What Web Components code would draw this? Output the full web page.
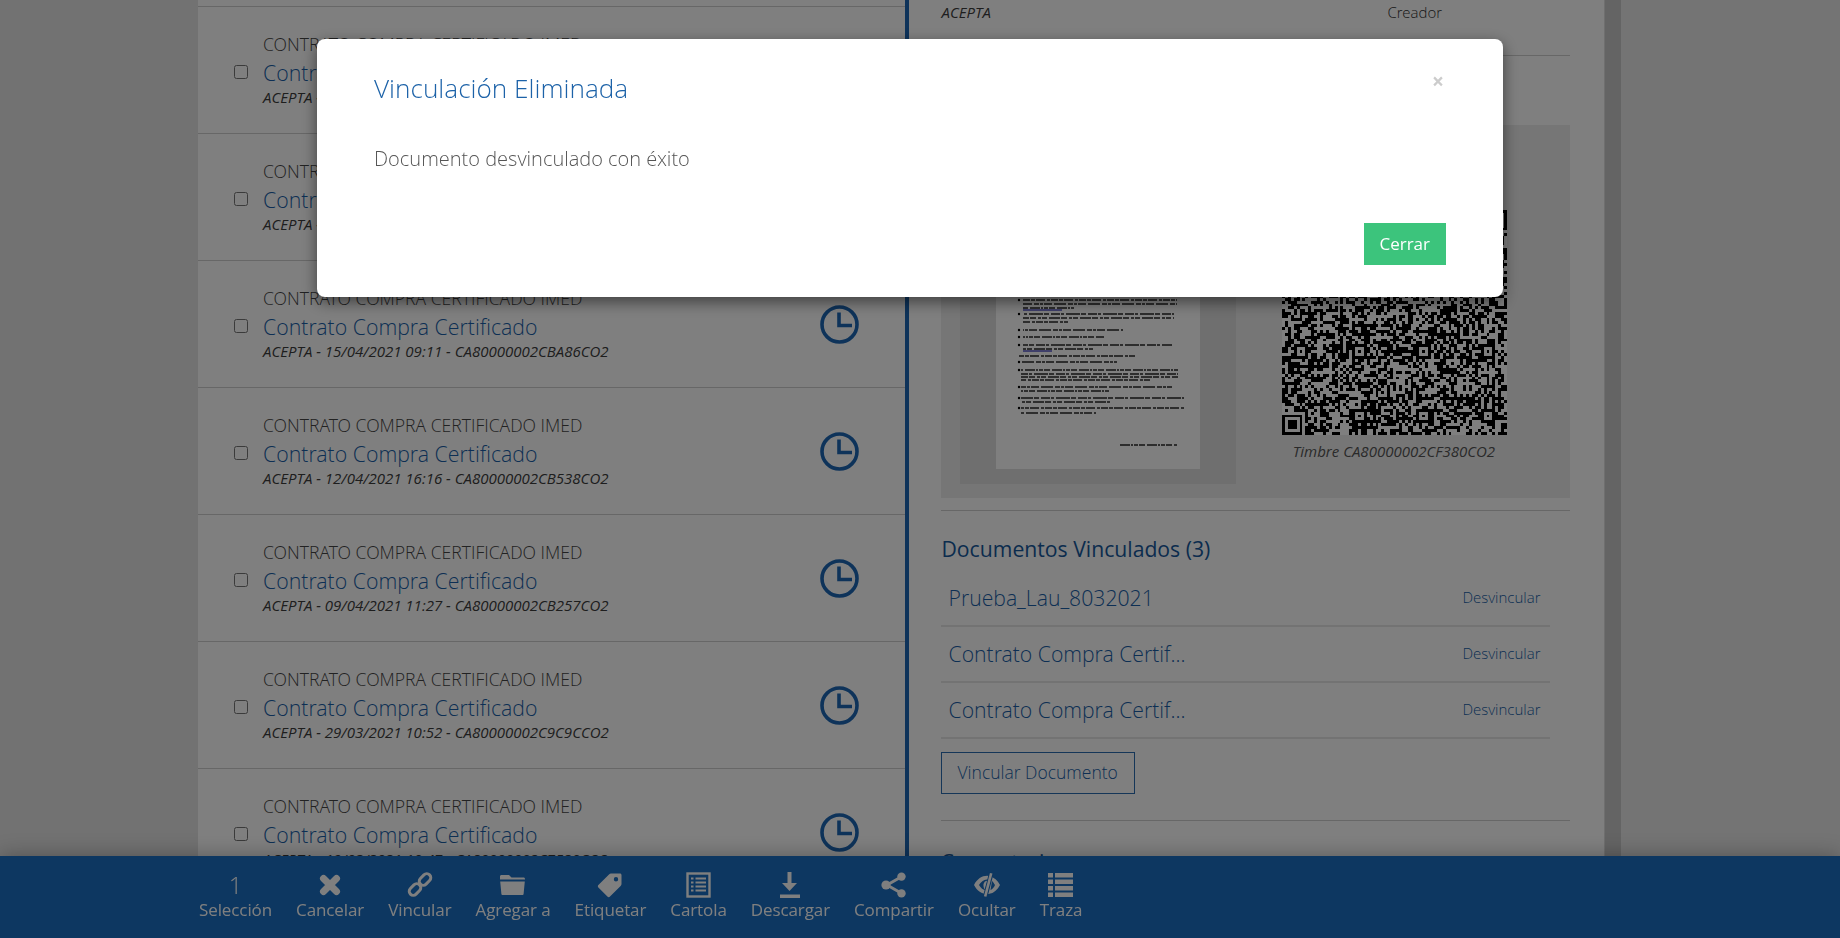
<!DOCTYPE html>
<html lang="es">
<head>
<meta charset="utf-8">
<title>Documentos</title>
<style>
    html, body { margin: 0; height: 100%; overflow: hidden; }
    body { font-family: "Open Sans", "Liberation Sans", sans-serif; background: #e4e4e4; }
</style>
</head>
<body>
<app-shell>
    <doc-list slot="list">
        <doc-row date="27/04/2021 12:02" code="CA80000002CD110CO2"></doc-row>
        <doc-row date="20/04/2021 15:38" code="CA80000002CC4A2CO2"></doc-row>
        <doc-row date="15/04/2021 09:11" code="CA80000002CBA86CO2"></doc-row>
        <doc-row date="12/04/2021 16:16" code="CA80000002CB538CO2"></doc-row>
        <doc-row date="09/04/2021 11:27" code="CA80000002CB257CO2"></doc-row>
        <doc-row date="29/03/2021 10:52" code="CA80000002C9C9CCO2"></doc-row>
        <doc-row date="19/03/2021 10:47" code="CA80000002C7520CO2"></doc-row>
    </doc-list>
    <doc-detail slot="detail"></doc-detail>
</app-shell>

<action-bar>
    <bar-item label="Selección"><span class="count">1</span></bar-item>
    <bar-item label="Cancelar" icon="cancel"></bar-item>
    <bar-item label="Vincular" icon="link"></bar-item>
    <bar-item label="Agregar a" icon="folder"></bar-item>
    <bar-item label="Etiquetar" icon="tag"></bar-item>
    <bar-item label="Cartola" icon="list"></bar-item>
    <bar-item label="Descargar" icon="download"></bar-item>
    <bar-item label="Compartir" icon="share"></bar-item>
    <bar-item label="Ocultar" icon="eye"></bar-item>
    <bar-item label="Traza" icon="rows"></bar-item>
</action-bar>

<modal-dialog heading="Vinculación Eliminada">
    Documento desvinculado con éxito
</modal-dialog>

<script>
const LIGHT = '"Open Sans Light", "Open Sans", "Liberation Sans", sans-serif';

/**
 * Page frame: grey gutter, content column, scrollbar strip
 */
class AppShell extends HTMLElement {
    constructor() {
        super();
        this.attachShadow({ mode: 'open' });
        this.shadowRoot.innerHTML = `
            <style>
                :host { display: flex; height: 938px; overflow: hidden; }
                .gutter { flex: 0 0 198px; }
                .content { flex: 0 0 1406px; display: flex; background: #fff; }
                .strip { flex: 0 0 17px; background: #c8c8c8; border-left: 1px solid #dedede; box-sizing: border-box; }
                .rest { flex: 1; background: #e8e8e8; }
            </style>
            <div class="gutter"></div>
            <div class="content">
                <slot name="list"></slot>
                <slot name="detail"></slot>
            </div>
            <div class="strip"></div>
            <div class="rest"></div>
        `;
    }
}

class DocList extends HTMLElement {
    constructor() {
        super();
        this.attachShadow({ mode: 'open' });
        this.shadowRoot.innerHTML = `
            <style>
                :host { display: block; width: 707px; height: 938px; overflow: hidden; }
                .cut { height: 6px; border-bottom: 1px solid #cfcfcf; }
            </style>
            <div class="cut"></div>
            <slot></slot>
        `;
    }
}

class DocRow extends HTMLElement {
    constructor() {
        super();
        this.attachShadow({ mode: 'open' });
    }

    connectedCallback() {
        const date = this.getAttribute('date');
        const code = this.getAttribute('code');
        this.shadowRoot.innerHTML = `
            <style>
                :host {
                    display: flex;
                    align-items: center;
                    box-sizing: border-box;
                    height: 127px;
                    padding: 0 46px 0 36px;
                    border-bottom: 1px solid #cfcfcf;
                    font-family: ${LIGHT};
                }
                input { width: 14px; height: 14px; margin: 3px 15px 0 0; flex: none; }
                .text { flex: 1; min-width: 0; padding-bottom: 1px; }
                .kind { font-size: 17.6px; line-height: 22px; font-weight: 300; color: #444; }
                .name { font-size: 21.3px; line-height: 27px; font-weight: 300; color: #1a5fa8; margin-top: 4px; }
                .meta { font-family: "Open Sans", sans-serif; font-size: 15px; line-height: 20px; font-style: italic; color: #3c3c3c; margin-top: 1px; }
                svg { flex: none; display: block; }
            </style>
            <input type="checkbox">
            <div class="text">
                <div class="kind">CONTRATO COMPRA CERTIFICADO IMED</div>
                <div class="name">Contrato Compra Certificado</div>
                <div class="meta">ACEPTA - ${date} - ${code}</div>
            </div>
            <svg width="39" height="39" viewBox="0 0 39 39" fill="none" stroke="#1c66b4" stroke-width="3.6">
                <circle cx="19.5" cy="19.5" r="17.5"/>
                <path d="M19 7.5V20.5H32"/>
            </svg>
        `;
    }
}

/* Right column with the signature preview and linked documents */
class DocDetail extends HTMLElement {
    constructor() {
        super();
        this.attachShadow({ mode: 'open' });
        this.shadowRoot.innerHTML = `
            <style>
                :host {
                    display: block;
                    width: 699px;
                    height: 938px;
                    overflow: hidden;
                    box-sizing: border-box;
                    border-left: 4.5px solid #1c66b4;
                    padding-left: 31.5px;
                    font-family: ${LIGHT};
                }
                .inner { width: 629px; }
                .signer {
                    display: flex;
                    height: 56px;
                    box-sizing: border-box;
                    padding-left: 1px;
                    font-size: 15px;
                    line-height: 24px;
                    font-weight: 300;
                    color: #333;
                    border-bottom: 1px solid #cfcfcf;
                }
                .signer i { flex: 0 0 446px; font-family: "Open Sans", sans-serif; font-weight: 400; color: #3c3c3c; }
                .seal {
                    display: flex;
                    margin-top: 69px;
                    height: 373px;
                    box-sizing: border-box;
                    padding: 14px 0 14px 19px;
                    background: #ededed;
                }
                .caption {
                    font-family: "Open Sans", sans-serif;
                    font-size: 15px;
                    line-height: 20px;
                    font-style: italic;
                    color: #555;
                    text-align: center;
                    margin-top: 6px;
                }
                .stamp { margin: 71px 0 0 46px; width: 225px; }
                hr { border: 0; border-top: 1px solid #cfcfcf; margin: 0; }
                .sep-a { margin-top: 12px; }
                h3 {
                    margin: 24px 0 9px 1px;
                    font-family: "Open Sans", sans-serif;
                    font-size: 21.2px;
                    line-height: 27px;
                    font-weight: 400;
                    color: #17599c;
                }
                .linked { width: 609px; }
                .btn {
                    display: inline-block;
                    box-sizing: border-box;
                    height: 42px;
                    margin-top: 13px;
                    padding: 0 16px;
                    border: 1px solid #2a6cb0;
                    font-size: 17.5px;
                    line-height: 38px;
                    font-weight: 300;
                    color: #1a5fa8;
                }
                .sep-b { margin-top: 26px; }
                .comments { margin: 27px 0 0; }
            </style>
            <div class="inner">
                <div class="signer"><i>ACEPTA</i><span>Creador</span></div>
                <div class="seal">
                    <doc-preview></doc-preview>
                    <div class="stamp">
                        <qr-code></qr-code>
                        <div class="caption">Timbre CA80000002CF380CO2</div>
                    </div>
                </div>
                <hr class="sep-a">
                <h3>Documentos Vinculados (3)</h3>
                <div class="linked">
                    <linked-doc name="Prueba_Lau_8032021"></linked-doc>
                    <linked-doc name="Contrato Compra Certif..."></linked-doc>
                    <linked-doc name="Contrato Compra Certif..."></linked-doc>
                </div>
                <div class="btn">Vincular Documento</div>
                <hr class="sep-b">
                <h3 class="comments">Comentarios</h3>
            </div>
        `;
    }
}

class LinkedDoc extends HTMLElement {
    constructor() {
        super();
        this.attachShadow({ mode: 'open' });
    }

    connectedCallback() {
        this.shadowRoot.innerHTML = `
            <style>
                :host {
                    display: flex;
                    justify-content: space-between;
                    align-items: center;
                    box-sizing: border-box;
                    height: 56px;
                    padding: 0 9px 2px 8px;
                    border-bottom: 2px solid #e6e6e6;
                    font-weight: 300;
                    color: #1a5fa8;
                }
                .name { font-size: 21.2px; }
                .unlink { font-size: 15px; }
            </style>
            <span class="name">${this.getAttribute('name')}</span>
            <span class="unlink">Desvincular</span>
        `;
    }
}

/* Thumbnail of the signed page, the print is too small to be read */
class DocPreview extends HTMLElement {
    constructor() {
        super();
        this.attachShadow({ mode: 'open' });
        const lines = [
            [1023, 1177, 300], [1023, 1177, 304], [1023, 1074, 308],
            [1023, 1174, 314], [1023, 1174, 318], [1023, 1068, 322],
            [1023, 1123, 330], [1023, 1104, 337],
            [1023, 1172, 345], [1023, 1093, 349],
            [1019, 1135, 356], [1021, 1117, 362],
            [1021, 1178, 370], [1021, 1178, 374], [1021, 1178, 377], [1021, 1150, 380],
            [1021, 1172, 387], [1021, 1110, 391],
            [1021, 1184, 398], [1021, 1110, 402],
            [1021, 1184, 408], [1021, 1096, 413],
            [1119, 1177, 445]
        ];
        const dashes = ['7 1 4 1 9 2 3 1', '12 2 5 1 3 1 8 2', '4 1 6 2 10 1 2 1', '9 1 3 2 14 1 5 2', '5 2 11 1 6 2 3 1'];
        const bullets = [300, 314, 330, 337, 345, 362, 370, 387, 398, 408];
        const top = 139, left = 960;
        const ink = lines.map(([a, b, y], i) =>
            `<line x1="${a - left}" x2="${b - left}" y1="${y - top}" y2="${y - top}" stroke-dasharray="${dashes[i % 5]}" stroke-dashoffset="${i * 3}"/>`).join('');
        const dots = bullets.map(y => `<circle cx="${1019 - left}" cy="${y - top}" r="1.2"/>`).join('');
        this.shadowRoot.innerHTML = `
            <style>
                :host { display: block; width: 276px; height: 345px; background: #dfdfdf; }
                svg { display: block; }
            </style>
            <svg width="276" height="345" viewBox="0 0 276 345">
                <defs><filter id="soft"><feGaussianBlur stdDeviation="0.5"/></filter></defs>
                <rect x="36" y="0" width="204" height="330" fill="#fff"/>
                <g filter="url(#soft)">
                    <g stroke="#000" stroke-width="1.5" opacity=".85">${ink}</g>
                    <g fill="#000">${dots}</g>
                    <g stroke="#00a" stroke-width="1"><line x1="63" x2="102" y1="171" y2="171"/><line x1="63" x2="92" y1="212" y2="212"/></g>
                </g>
            </svg>
        `;
    }
}

class QrCode extends HTMLElement {
    constructor() {
        super();
        this.attachShadow({ mode: 'open' });
        this.shadowRoot.innerHTML = `
            <style>
                :host { display: block; width: 225px; height: 225px; background: #fff; }
                svg { display: block; }
            </style>
            <svg width="225" height="225" viewBox="0 0 77 77" shape-rendering="crispEdges">${this.modules()}</svg>
        `;
    }

    modules() {
        const size = 77;
        const grid = [];
        let seed = 38016;
        const rand = () => {
            seed = (seed * 1664525 + 1013904223) >>> 0;
            return (seed >>> 16) / 65536;
        };
        for (let y = 0; y < size; y++) {
            grid.push([]);
            for (let x = 0; x < size; x++) grid[y].push(rand() < 0.52);
        }
        const block = (x0, y0, w, fn) => {
            for (let y = y0; y < y0 + w; y++) {
                for (let x = x0; x < x0 + w; x++) {
                    if (grid[y] && x >= 0 && x < size) grid[y][x] = fn(x - x0, y - y0);
                }
            }
        };
        const finder = (x, y) => {
            block(x - 1, y - 1, 9, () => false);
            block(x, y, 7, (i, j) => i === 0 || j === 0 || i === 6 || j === 6 || (i > 1 && i < 5 && j > 1 && j < 5));
        };
        const align = [6, 26, 48, 70];
        align.forEach(ay => align.forEach(ax => {
            block(ax - 2, ay - 2, 5, (i, j) => i === 0 || j === 0 || i === 4 || j === 4 || (i === 2 && j === 2));
        }));
        finder(0, 0);
        finder(70, 0);
        finder(0, 70);
        let out = '';
        grid.forEach((row, y) => row.forEach((on, x) => {
            if (on) out += `<rect x="${x}" y="${y}" width="1" height="1"/>`;
        }));
        return out;
    }
}

const BAR_ICONS = {
    cancel: '<path d="M6.5 6.5L19.5 19.5M19.5 6.5L6.5 19.5" stroke="#fff" stroke-width="7" stroke-linecap="round" fill="none"/>',
    link: `<g fill="none" stroke="#fff" stroke-width="3">
            <rect x="1.5" y="13.5" width="13" height="8" rx="4" transform="rotate(-45 8 17.5)"/>
            <rect x="11.5" y="3.5" width="13" height="8" rx="4" transform="rotate(-45 18 7.5)"/>
           </g>`,
    folder: '<path d="M0 7V4.5C0 3.7.6 3 1.5 3H9l2.5 2.5H23.5C24.4 5.5 25 6.2 25 7v.5H0ZM.2 9.5H24.8L23.6 22c-.1.6-.6 1-1.2 1H2.6c-.6 0-1.1-.4-1.2-1Z" fill="#fff"/>',
    tag: '<path fill-rule="evenodd" d="M14 1.5H23c.8 0 1.5.7 1.5 1.5v9c0 .8-.3 1.4-.9 2L13 24.6c-.7.7-1.9.7-2.6 0L1.4 15.6c-.7-.7-.7-1.9 0-2.6L12 2.4c.6-.6 1.2-.9 2-.9ZM19 5a2.2 2.2 0 1 0 0 4.4A2.2 2.2 0 0 0 19 5Z" fill="#fff"/>',
    list: `<rect x="1.5" y="1.5" width="22" height="23" fill="none" stroke="#fff" stroke-width="2.4"/>
           <path d="M5 6.5h2.5M9.5 6.5H20M5 10.5h2.5M9.5 10.5H20M5 14.5h2.5M9.5 14.5H20M5 18.5h2.5M9.5 18.5H20" stroke="#fff" stroke-width="2" fill="none"/>`,
    download: '<path d="M10.5 0h4v11h5.5l-7.5 8-7.5-8h5.5ZM3 22.5h20v3.5H3Z" fill="#fff"/>',
    share: `<path d="M6 13L20 5M6 13L20 21" stroke="#fff" stroke-width="3" fill="none"/>
            <circle cx="5" cy="13" r="4.6" fill="#fff"/><circle cx="20.5" cy="4.6" r="4.2" fill="#fff"/><circle cx="20.5" cy="21.4" r="4.2" fill="#fff"/>`,
    eye: `<path fill-rule="evenodd" d="M0 13C3 7 8 3.800 13 3.800S23 7 26 13c-3 6-8 9.200-13 9.200S3 19 0 13ZM5 13c1.800 3 4 5 7 5.300l3.500-10.600C14.700 7.500 13.800 7.500 13 7.500 9.500 7.500 6.800 10 5 13ZM16.500 18c2-.8 3.500-2.600 4.500-5-.8-1.500-2-3-3-4Z" fill="#fff"/>
          <path d="M9.500 12.500c.3-2.500 2-4 4.300-3.800l-3 8.700c-1-1-1.500-3-1.300-4.900Z" fill="#fff"/>
          <path d="M17.500 0.500L11 25.500" stroke="#1a6ec2" stroke-width="4.600"/>
          <path d="M17.200 1.200L11.200 24.500" stroke="#fff" stroke-width="2.600"/>`,
    rows: '<path d="M0 1h5v4.500H0ZM7 1h18v4.500H7ZM0 7.500h5V12H0ZM7 7.500h18V12H7ZM0 14h5v4.500H0ZM7 14h18v4.500H7ZM0 20.500h5V25H0ZM7 20.500h18V25H7Z" fill="#fff"/>'
};

class BarItem extends HTMLElement {
    constructor() {
        super();
        this.attachShadow({ mode: 'open' });
    }

    connectedCallback() {
        const icon = BAR_ICONS[this.getAttribute('icon')];
        const top = icon ? `<svg width="26" height="26" viewBox="0 0 26 26">${icon}</svg>` : '<slot></slot>';
        this.shadowRoot.innerHTML = `
            <style>
                :host {
                    display: flex;
                    flex-direction: column;
                    align-items: center;
                    color: #fff;
                }
                .icon { height: 28px; display: flex; align-items: center; justify-content: center; }
                .label { font-size: 17px; line-height: 22px; letter-spacing: -0.1px; }
                svg { display: block; }
                ::slotted(.count) { font-family: ${LIGHT}; font-size: 24px; font-weight: 300; line-height: 28px; }
            </style>
            <div class="icon">${top}</div>
            <div class="label">${this.getAttribute('label')}</div>
        `;
    }
}

class ActionBar extends HTMLElement {
    constructor() {
        super();
        this.attachShadow({ mode: 'open' });
        this.shadowRoot.innerHTML = `
            <style>
                :host {
                    position: fixed;
                    left: 0;
                    right: 0;
                    bottom: 0;
                    height: 82px;
                    box-sizing: border-box;
                    display: flex;
                    gap: 24px;
                    padding: 15px 0 0 199px;
                    background: #1a6ec2;
                    box-shadow: 0 0 20px rgba(0, 0, 0, .3);
                }
            </style>
            <slot></slot>
        `;
    }
}

/**
 * Modal with its backdrop, covers the whole window
 */
class ModalDialog extends HTMLElement {
    constructor() {
        super();
        this.attachShadow({ mode: 'open' });
    }

    connectedCallback() {
        this.shadowRoot.innerHTML = `
            <style>
                :host {
                    position: fixed;
                    inset: 0;
                    display: block;
                    background: rgba(0, 0, 0, .5);
                    font-family: ${LIGHT};
                }
                .dialog {
                    box-sizing: border-box;
                    width: 1186px;
                    height: 258px;
                    margin: 39px 0 0 317px;
                    padding: 0 57px;
                    display: flex;
                    flex-direction: column;
                    background: #fff;
                    border-radius: 8px;
                    box-shadow: 0 5px 15px rgba(0, 0, 0, .5);
                }
                .head { display: flex; justify-content: space-between; align-items: flex-start; padding-top: 32px; }
                h4 { margin: 0; font-size: 26.2px; line-height: 34px; font-weight: 300; color: #1c62a8; }
                .close { font-family: "Open Sans", sans-serif; font-size: 21px; line-height: 24px; margin-top: -2px; font-weight: 700; color: #ccc; margin-right: 2px; }
                .body { margin-top: 41px; font-size: 20px; line-height: 26px; font-weight: 300; color: #555; flex: 1; }
                .foot { display: flex; justify-content: flex-end; padding-bottom: 32px; }
                .ok {
                    height: 42px;
                    padding: 0 16px 0 15px;
                    font-family: "Open Sans", sans-serif;
                    font-size: 17px;
                    line-height: 42px;
                    color: #fff;
                    background: #3cc47c;
                }
            </style>
            <div class="dialog">
                <div class="head">
                    <h4>${this.getAttribute('heading')}</h4>
                    <span class="close">×</span>
                </div>
                <div class="body"><slot></slot></div>
                <div class="foot"><span class="ok">Cerrar</span></div>
            </div>
        `;
    }
}

customElements.define('app-shell', AppShell);
customElements.define('doc-list', DocList);
customElements.define('doc-row', DocRow);
customElements.define('doc-detail', DocDetail);
customElements.define('linked-doc', LinkedDoc);
customElements.define('doc-preview', DocPreview);
customElements.define('qr-code', QrCode);
customElements.define('bar-item', BarItem);
customElements.define('action-bar', ActionBar);
customElements.define('modal-dialog', ModalDialog);
</script>
</body>
</html>
